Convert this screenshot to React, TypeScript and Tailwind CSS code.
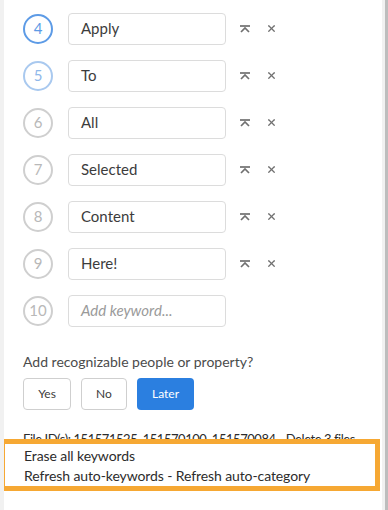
import { X } from "lucide-react";

const rows = [
  { n: 4, text: "Apply", tone: "active" },
  { n: 5, text: "To", tone: "soft" },
  { n: 6, text: "All", tone: "idle" },
  { n: 7, text: "Selected", tone: "idle" },
  { n: 8, text: "Content", tone: "idle" },
  { n: 9, text: "Here!", tone: "idle" },
];

const circleTone: Record<string, string> = {
  active: "border-[#5d9be6] text-[#5d9be6]",
  soft: "border-[#a9c9ef] text-[#8fb8ea]",
  idle: "border-[#cfcfcf] text-[#b8b8b8]",
};

function MoveTop() {
  return (
    <svg width="12" height="8" viewBox="0 0 12 8" fill="none" stroke="#707070" strokeWidth="1.7">
      <path d="M1 1h10" />
      <path d="M2 7l4-4 4 4" />
    </svg>
  );
}

function Row({ n, text, tone }: { n: number; text: string; tone: string }) {
  return (
    <div className="flex h-[47px] items-center">
      <div
        className={`flex h-[30px] w-[30px] items-center justify-center rounded-full border-2 text-[15px] ${circleTone[tone]}`}
      >
        {n}
      </div>
      <div className="ml-[15px] flex h-[32px] w-[158px] items-center rounded border border-[#dcdcdc] pl-[12px] text-[15px] text-[#3c3c3c]">
        {text}
      </div>
      <div className="ml-[12px] flex w-[14px] justify-center">
        <MoveTop />
      </div>
      <X className="ml-[14px] h-[11px] w-[11px] text-[#707070]" strokeWidth={2.8} />
    </div>
  );
}

export default function App() {
  return (
    <div className="flex h-[510px] w-[388px] bg-white font-['Lato',sans-serif]">
      <div className="w-[4px] bg-[#f1f1f1]" />
      <div className="flex-1 overflow-hidden">
        <div className="pl-[19px] pt-[5px]">
          {rows.map((r) => (
            <Row key={r.n} {...r} />
          ))}
          <div className="flex h-[47px] items-center">
            <div className="flex h-[30px] w-[30px] items-center justify-center rounded-full border-2 border-[#cfcfcf] text-[15px] text-[#b8b8b8]">
              10
            </div>
            <div className="ml-[15px] flex h-[32px] w-[158px] items-center rounded border border-[#dcdcdc] pl-[12px] text-[15px] italic text-[#9a9a9a]">
              Add keyword...
            </div>
          </div>
          <div className="mt-[17px] text-[14px] text-[#4b4b4b]">Add recognizable people or property?</div>
          <div className="mt-[6px] flex gap-[10px] text-[12px]">
            <button className="h-[32px] w-[48px] rounded-sm border border-[#cfcfcf] text-[#3c3c3c]">Yes</button>
            <button className="h-[32px] w-[46px] rounded-sm border border-[#cfcfcf] text-[#3c3c3c]">No</button>
            <button className="h-[32px] w-[57px] rounded-sm bg-[#2b7fe0] text-white">Later</button>
          </div>
          <div className="mt-[20px] whitespace-nowrap text-[13px] leading-[18px] tracking-[-0.45px] text-[#2c2c2c]">
            File ID(s): 151571525, 151570100, 151570084 - Delete 3 files -
          </div>
        </div>
        <div className="relative -ml-[4px] -mt-[9px] w-[380px] border-[5px] border-[#f6a833] bg-white pl-[19px] pt-[2px] text-[14px] leading-[20px] tracking-[-0.1px] text-[#2c2c2c]">
          <div>Erase all keywords</div>
          <div>Refresh auto-keywords - Refresh auto-category</div>
        </div>
      </div>
      <div className="w-[3px] bg-[#f1f1f1]" />
      <div className="w-[3px] bg-[#bdbdbd]" />
    </div>
  );
}
